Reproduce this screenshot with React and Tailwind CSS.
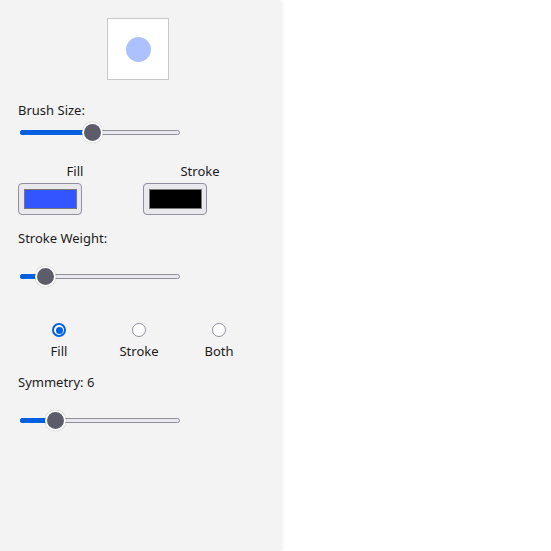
import React, { useState } from 'react';

const font = { fontFamily: '"Noto Sans", "Open Sans", sans-serif' };

const Slider = ({ pos }) => {
    // pos: thumb centre in px from track start (track is 160px wide)
    return (
        <div className="relative w-[160px] h-[20px] ml-[2px]">
            <div className="absolute left-0 right-0 top-[8px] h-[5px] rounded-full bg-[#e9e9ed] border border-[#8f8f9d]" />
            <div
                className="absolute left-0 top-[8px] h-[5px] rounded-full bg-[#0060df]"
                style={{ width: pos }}
            />
            <div
                className="absolute top-0 w-[21px] h-[21px] rounded-full bg-[#5c5c6b] border-2 border-white shadow-[0_0_1px_rgba(0,0,0,0.4)]"
                style={{ left: pos - 10 }}
            />
        </div>
    );
};

const ColorButton = ({ color }) => (
    <div className="w-[64px] h-[32px] rounded-[4px] bg-[#e9e9ed] border border-[#8f8f9d] flex items-center justify-center">
        <div className="w-[53px] h-[20px] border border-[#777]" style={{ backgroundColor: color }} />
    </div>
);

const Radio = ({ checked }) => (
    <div
        className={`w-[14px] h-[14px] rounded-full flex items-center justify-center ${
            checked ? 'border-2 border-[#0060df] bg-white' : 'border border-[#8f8f9d] bg-white'
        }`}
    >
        {checked && <div className="w-[7px] h-[7px] rounded-full bg-[#0060df]" />}
    </div>
);

export default function App() {
    const [mode] = useState('fill');

    return (
        <div className="flex w-[551px] h-[551px] bg-white text-[13px] text-[#1b1b1b]" style={font}>
            <div className="w-[280px] h-full bg-[#f3f3f3] shadow-[2px_0_4px_rgba(0,0,0,0.07)] pl-[18px] pt-[18px] flex flex-col">
                {/* preview */}
                <div className="ml-[89px] w-[62px] h-[62px] bg-white border border-[#c8c8c8] flex items-center justify-center">
                    <div className="w-[25px] h-[25px] rounded-full bg-[#adc1ff]" />
                </div>

                {/* brush size */}
                <div className="mt-[21px] leading-[18px]">Brush Size:</div>
                <div className="mt-[3px]">
                    <Slider pos={72} />
                </div>

                {/* fill / stroke colours */}
                <div className="mt-[20px] flex gap-[11px]">
                    <div className="w-[114px] flex flex-col">
                        <div className="text-center leading-[18px]">Fill</div>
                        <div className="mt-[3px]">
                            <ColorButton color="#3355ff" />
                        </div>
                    </div>
                    <div className="w-[114px] flex flex-col">
                        <div className="text-center leading-[18px]">Stroke</div>
                        <div className="mt-[3px]">
                            <ColorButton color="#000000" />
                        </div>
                    </div>
                </div>

                {/* stroke weight */}
                <div className="mt-[14px] leading-[18px]">Stroke Weight:</div>
                <div className="mt-[19px]">
                    <Slider pos={25} />
                </div>

                {/* mode */}
                <div className="mt-[37px] flex ml-[1px]">
                    {[
                        ['fill', 'Fill'],
                        ['stroke', 'Stroke'],
                        ['both', 'Both'],
                    ].map(([key, label]) => (
                        <div key={key} className="w-[80px] flex flex-col items-center">
                            <Radio checked={mode === key} />
                            <div className="mt-[5px] leading-[18px]">{label}</div>
                        </div>
                    ))}
                </div>

                {/* symmetry */}
                <div className="mt-[13px] leading-[18px]">Symmetry: 6</div>
                <div className="mt-[19px]">
                    <Slider pos={35} />
                </div>
            </div>
            <div className="flex-1" />
        </div>
    );
}
